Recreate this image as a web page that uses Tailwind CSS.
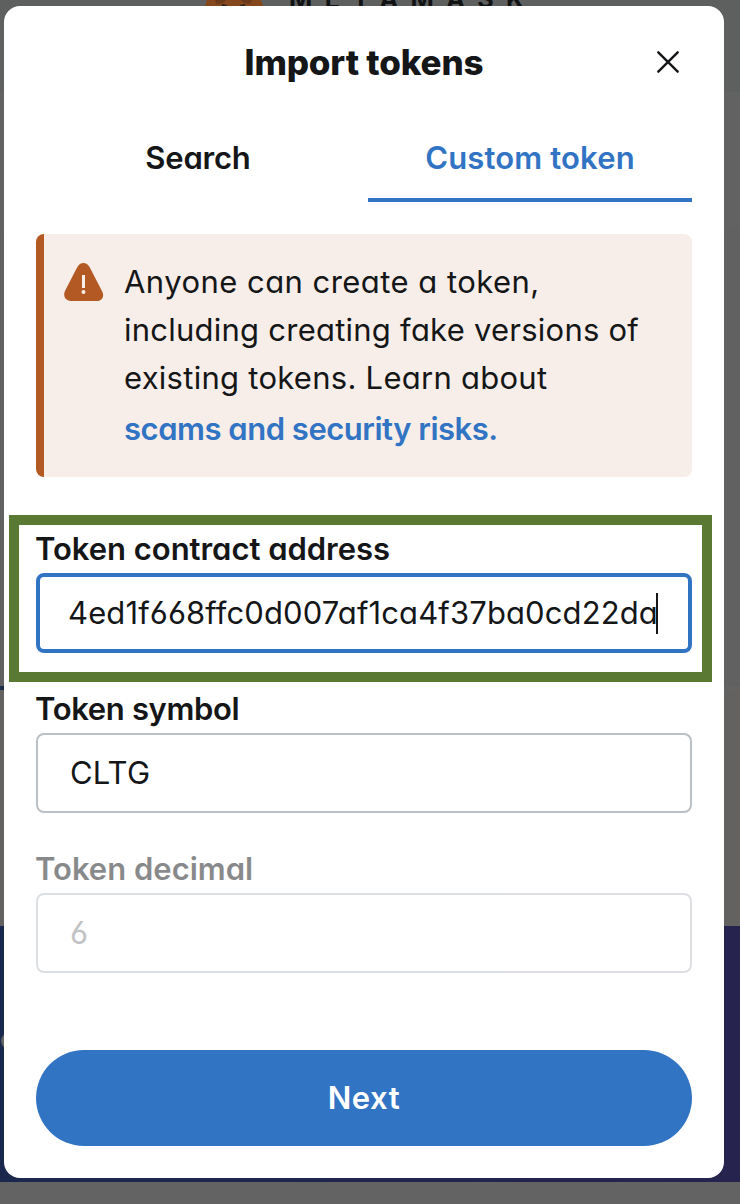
<!DOCTYPE html>
<html lang="en">
<head>
<meta charset="utf-8">
<title>Import tokens</title>
<script src="https://cdn.jsdelivr.net/npm/@tailwindcss/browser@4"></script>
</head>
<body class="relative h-[1204px] w-[740px] overflow-hidden bg-[#636363] font-['Inter','Lato',sans-serif] [font-feature-settings:'cv11','cv03'] text-[#141618]">
  <!-- dimmed page behind the dialog -->
  <div class="flex h-full flex-col">
    <div class="h-[92px] shrink-0 overflow-hidden bg-[#5e605f]">
      <svg class="block" width="740" height="92" viewBox="0 0 740 92">
        <path d="M208-2h52l5 12h-62z" fill="#84481c"/>
        <path d="M215 0h11l-3 3-7 1zM241 0h11l-2 4-6-1z" fill="#6b3a1b"/>
        <path d="M222 4l5 1-1 2h-4zM240 5l5-1v3h-4z" fill="#2d211b"/>
        <text x="289" y="8" textLength="235" font-size="25" font-weight="700" fill="#101214">METAMASK</text>
      </svg>
    </div>
    <div class="h-[136px] shrink-0 bg-[#626262]"></div>
    <div class="h-[458px] shrink-0 bg-[#616161]"></div>
    <div class="h-1 w-6 shrink-0 bg-[#1b304f]"></div>
    <div class="h-[236px] shrink-0 bg-[#636261]"></div>
    <div class="flex h-[256px] shrink-0 items-start bg-linear-to-r from-[#1b284d] to-[#26244f]">
      <div class="ml-px mt-[107px] size-4 rounded-full bg-[#636363]"></div>
    </div>
    <div class="grow bg-[#636363]"></div>
  </div>

  <main class="absolute left-1 top-1.5 flex h-[1172px] w-[720px] flex-col rounded-2xl bg-white px-8">
    <header class="relative flex h-[112px] shrink-0 items-center justify-center">
      <h1 class="whitespace-nowrap text-[35px] font-extrabold tracking-[-0.15px]">Import tokens</h1>
      <button class="absolute right-3 top-11" aria-label="Close">
        <svg width="24" height="24" viewBox="0 0 24 24" fill="none" stroke="#141618" stroke-width="2.4" stroke-linecap="round"><path d="M2.3 2.3l19.4 19.4M21.7 2.3L2.3 21.7"/></svg>
      </button>
    </header>

    <nav class="flex h-[84px] shrink-0 gap-2 text-[31px] font-[560]">
      <div class="flex flex-1 items-center justify-center border-b-4 border-transparent"><span class="whitespace-nowrap tracking-[-0.2px]">Search</span></div>
      <div class="flex flex-1 items-center justify-center border-b-4 border-[#3274c4] text-[#3274c4]"><span class="whitespace-nowrap tracking-[0.15px]">Custom token</span></div>
    </nav>

    <section class="mt-8 flex h-[243px] shrink-0 rounded-lg border-l-8 border-[#b35923] bg-[#f7eee9] py-6 pl-5">
      <svg class="mt-1 shrink-0" width="40" height="40" viewBox="0 0 40 40">
        <path d="M13.2 5.2C16-.5 22.800-.5 25.700 5.200L37.700 28.500C41 34 38.400 39 32.500 39H7.300C1.300 39-1.500 34 1.200 28.500Z" fill="#b35923"/>
        <path d="M18 13h3v13h-3z" fill="#f7eee9"/><circle cx="19.500" cy="30" r="2" fill="#f7eee9"/>
      </svg>
      <p class="ml-5 whitespace-nowrap text-[31px] leading-[48px]">
        <span class="block tracking-[0.46px]">Anyone can create a token,</span>
        <span class="block tracking-[0.24px]">including creating fake versions of</span>
        <span class="block tracking-[0.27px]">existing tokens. Learn about</span>
        <a class="block font-[580] leading-[54px] tracking-[-0.48px] text-[#3274c4]">scams and security risks.</a>
      </p>
    </section>

    <div class="mt-12 flex flex-col gap-8 text-[31px] [&_label]:flex [&_label]:h-12 [&_label]:items-center [&_label]:font-[560] [&_label]:whitespace-nowrap">
      <div>
        <label><span class="-ml-px tracking-[-0.03px]">Token contract address</span></label>
        <div class="flex h-20 items-center rounded-lg border-4 border-[#3274c4] pl-7">
          <span class="whitespace-nowrap tracking-[0.12px]">4ed1f668ffc0d007af1ca4f37ba0cd22da</span><i class="-ml-0.5 h-[41px] w-0.5 bg-[#141618]"></i>
        </div>
      </div>
      <div>
        <label><span class="-ml-px tracking-[-0.35px]">Token symbol</span></label>
        <div class="flex h-20 items-center rounded-lg border-2 border-[#bbc0c5] pl-8"><span class="tracking-[0.2px]">CLTG</span></div>
      </div>
      <div class="opacity-50">
        <label><span class="-ml-px">Token decimal</span></label>
        <div class="flex h-20 items-center rounded-lg border-2 border-[#bbc0c5] pl-8 text-[#84878a]"><span>6</span></div>
      </div>
    </div>

    <button class="mt-[77px] flex h-24 shrink-0 items-center justify-center rounded-full bg-[#3274c4] text-[31px] font-semibold tracking-[0.6px] text-white">Next</button>
  </main>

  <!-- highlight around the address field -->
  <div class="absolute left-[9px] top-[515px] h-[167px] w-[703px] border-[10px] border-[#5a7a34]"></div>
</body>
</html>
